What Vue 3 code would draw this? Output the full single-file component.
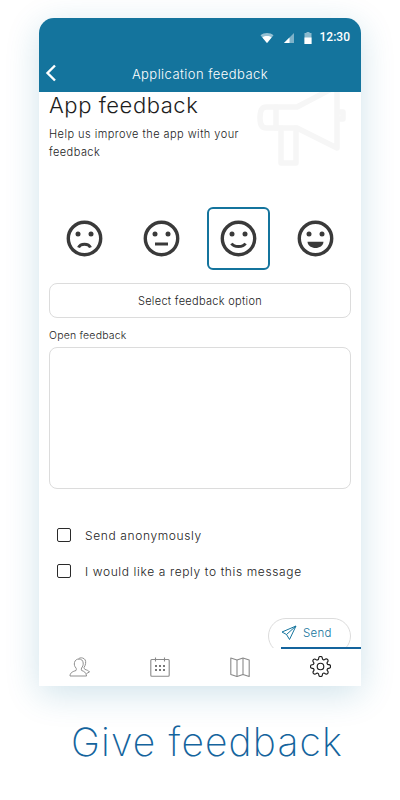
<template>
  <div class="screen">
    <div class="phone">
      <header class="app-header">
        <div class="status-bar">
          <svg class="st-icon" width="14" height="12" viewBox="0 0 14 12">
            <path d="M0.5 3.2 C4 0.4 10 0.4 13.5 3.2 L7 11 Z" fill="#fff" opacity="0.55" />
            <path d="M2.4 5.4 C5 3.6 9 3.6 11.6 5.4 L7 11 Z" fill="#fff" />
          </svg>
          <svg class="st-icon signal" width="12" height="12" viewBox="0 0 12 12">
            <path d="M11 1 V11 H1 Z" fill="#fff" opacity="0.45" />
            <path d="M6.5 5.5 V11 H1 Z" fill="#fff" />
          </svg>
          <svg class="st-icon battery" width="8" height="12" viewBox="0 0 8 12">
            <path d="M2.5 0 H5.5 V1 H7.5 V12 H0.5 V1 H2.5 Z" fill="#fff" opacity="0.5" />
            <rect x="0.5" y="5.5" width="7" height="6.5" fill="#fff" />
          </svg>
          <span class="clock">12:30</span>
        </div>
        <div class="nav-bar">
          <svg class="back" width="12" height="18" viewBox="0 0 12 18">
            <path d="M10 1.5 L2.5 9 L10 16.5" fill="none" stroke="#fff" stroke-width="2.4" />
          </svg>
          <span class="nav-title">Application feedback</span>
        </div>
      </header>

      <main class="content">
        <svg class="megaphone" width="95" height="76" viewBox="0 0 95 76" fill="none" stroke="#f6f6f6" stroke-width="5.5" stroke-linejoin="round" stroke-linecap="round">
          <path d="M11 15 H42 L82 -6 V56 L42 36 H11 Q5 36 5 26 Q5 15 11 15 Z" />
          <path d="M21 15 V36" />
          <path d="M26 36 V71 H41 V36" />
          <path d="M84 20 H88 V27 H84" />
        </svg>

        <h1>App feedback</h1>
        <p class="intro">Help us improve the app with your feedback</p>

        <div class="faces">
          <button
            v-for="face in faces"
            :key="face.id"
            class="face"
            :class="{ selected: face.id === selected }"
            @click="selected = face.id">
            <svg width="37" height="37" viewBox="0 0 37 37">
              <circle cx="18.5" cy="18.5" r="16.2" fill="none" stroke="#3a3a3a" stroke-width="3.4" />
              <circle cx="12" cy="14" r="2.5" fill="#3a3a3a" />
              <circle cx="25" cy="14" r="2.5" fill="#3a3a3a" />
              <path v-if="face.id === 'sad'" d="M12.5 27.5 C14.5 23 22.5 23 24.5 27.5" fill="none" stroke="#3a3a3a" stroke-width="3" />
              <path v-if="face.id === 'neutral'" d="M12 24 H25" fill="none" stroke="#3a3a3a" stroke-width="3" />
              <path v-if="face.id === 'happy'" d="M11.5 23.5 C14 27.5 23 27.5 25.5 23.5" fill="none" stroke="#3a3a3a" stroke-width="3" />
              <path v-if="face.id === 'great'" d="M10.5 21.7 H26.5 C26 30 11 30 10.5 21.7 Z" fill="#3a3a3a" />
            </svg>
          </button>
        </div>

        <button class="select-option">Select feedback option</button>

        <label class="field-label">Open feedback</label>
        <div class="textarea"></div>

        <div class="checks">
          <div class="check-row">
            <span class="checkbox"></span>
            <span>Send anonymously</span>
          </div>
          <div class="check-row">
            <span class="checkbox"></span>
            <span>I would like a reply to this message</span>
          </div>
        </div>

        <div class="send-row">
          <button class="send">
            <svg width="16" height="16" viewBox="0 0 16 16" fill="none" stroke="#14749d" stroke-width="1" stroke-linejoin="round">
              <path d="M15 1 L1 7 L5.5 9.5 L8.5 14.5 Z" />
              <path d="M15 1 L5.5 9.5" />
            </svg>
            <span>Send</span>
          </button>
        </div>
      </main>

      <nav class="tabs">
        <span class="indicator"></span>
        <div class="tab">
          <svg width="22" height="20" viewBox="0 0 22 20" fill="none" stroke="#909090" stroke-width="1" stroke-linejoin="round">
            <path d="M1 19 C1 15.5 4 14.5 7 13.5 C7.5 12.5 7.5 11.8 7 11 C5.5 9.5 5 7.5 5.5 5.5 C6 3 8 2 10 2 C12 2 14 3.2 14.2 6 C14.4 8 13.6 9.8 12.6 11 C12.2 11.8 12.2 12.5 12.6 13.5 C15 14.3 17 15.2 17.6 19 Z" />
            <path d="M9.5 2 C10.5 0.8 12 0.6 13.5 1 C16 1.6 17 3.6 16.6 6.4 C16.4 8 15.8 9.4 15 10.5 C15 11.5 15.4 12 16 12.4 C17.5 13 19.5 13.4 20.5 15 L17.5 16.5" />
          </svg>
        </div>
        <div class="tab">
          <svg width="20" height="20" viewBox="0 0 20 20" fill="none" stroke="#8a8a8a" stroke-width="1.1">
            <rect x="0.8" y="2.5" width="18.4" height="16.7" rx="1" />
            <path d="M5.5 0.5 V4.5 M14.5 0.5 V4.5" />
            <g fill="#777" stroke="none">
              <rect x="5" y="8" width="2" height="2" /><rect x="9" y="8" width="2" height="2" /><rect x="13" y="8" width="2" height="2" />
              <rect x="5" y="12" width="2" height="2" /><rect x="9" y="12" width="2" height="2" /><rect x="13" y="12" width="2" height="2" />
            </g>
          </svg>
        </div>
        <div class="tab">
          <svg width="20" height="20" viewBox="0 0 20 20" fill="none" stroke="#8a8a8a" stroke-width="1.1" stroke-linejoin="round">
            <path d="M0.8 1 L7 3 L13 1 L19.2 3 V19.5 L13 17.5 L7 19.5 L0.8 17.5 Z" />
            <path d="M7 3 V19.5 M13 1 V17.5" />
          </svg>
        </div>
        <div class="tab">
          <svg width="21" height="21" viewBox="0.5 0.5 23 23" fill="none" stroke="#1c1c1c" stroke-width="1.25" stroke-linejoin="round">
            <circle cx="12" cy="12" r="3.6" />
            <path d="M19.4 15a1.65 1.65 0 0 0 .33 1.82l.06.06a2 2 0 1 1-2.83 2.83l-.06-.06a1.65 1.65 0 0 0-1.82-.33 1.65 1.65 0 0 0-1 1.51V21a2 2 0 1 1-4 0v-.09a1.65 1.65 0 0 0-1-1.51 1.65 1.65 0 0 0-1.82.33l-.06.06a2 2 0 1 1-2.83-2.83l.06-.06a1.65 1.65 0 0 0 .33-1.82 1.65 1.65 0 0 0-1.51-1H3a2 2 0 1 1 0-4h.09a1.65 1.65 0 0 0 1.51-1 1.65 1.65 0 0 0-.33-1.82l-.06-.06a2 2 0 1 1 2.83-2.83l.06.06a1.65 1.65 0 0 0 1.82.33H9a1.65 1.65 0 0 0 1-1.51V3a2 2 0 1 1 4 0v.09a1.65 1.65 0 0 0 1 1.51 1.65 1.65 0 0 0 1.82-.33l.06-.06a2 2 0 1 1 2.83 2.83l-.06.06a1.65 1.65 0 0 0-.33 1.82V9a1.65 1.65 0 0 0 1.51 1H21a2 2 0 1 1 0 4h-.09a1.65 1.65 0 0 0-1.51 1z" />
          </svg>
        </div>
      </nav>
    </div>

    <h2 class="caption">Give feedback</h2>
  </div>
</template>

<script setup>
import { ref } from 'vue'

const selected = ref('happy')

const faces = [
  { id: 'sad' },
  { id: 'neutral' },
  { id: 'happy' },
  { id: 'great' }
]
</script>

<style scoped>
.screen {
  width: 400px;
  height: 800px;
  padding-top: 18px;
  box-sizing: border-box;
  background: #fff;
  overflow: hidden;
  font-family: "Inter", "Open Sans", sans-serif;
  font-weight: 300;
  color: #222;
}

.phone {
  position: relative;
  width: 322px;
  height: 668px;
  margin: 0 0 0 39px;
  display: flex;
  flex-direction: column;
  background: #fff;
  border-radius: 15px 15px 0 0;
  box-shadow: 0 8px 34px rgba(20, 116, 157, 0.2);
}

.app-header {
  height: 74px;
  flex-shrink: 0;
  background: #14749d;
  border-radius: 15px 15px 0 0;
  color: #fff;
}

.status-bar {
  height: 38px;
  display: flex;
  align-items: center;
  justify-content: flex-end;
  padding-right: 11px;
}

.st-icon {
  margin-right: 9px;
  margin-top: 1px;
}

.st-icon.battery {
  margin-right: 8px;
}

.clock {
  font-family: "Roboto", sans-serif;
  font-weight: 500;
  font-size: 12px;
}

.nav-bar {
  position: relative;
  height: 36px;
  display: flex;
  align-items: center;
  justify-content: center;
}

.back {
  position: absolute;
  left: 6px;
  top: 8px;
}

.nav-title {
  font-size: 13px;
  font-weight: 300;
  letter-spacing: 0.45px;
  margin-top: -1px;
}

.content {
  position: relative;
  flex: 1;
  min-height: 0;
  padding: 0 10px;
}

.megaphone {
  position: absolute;
  right: 11px;
  top: 0;
}

h1 {
  position: relative;
  margin: 0;
  height: 26px;
  line-height: 26px;
  font-size: 22px;
  font-weight: 300;
  letter-spacing: 0.55px;
  color: #1d1d1d;
}

.intro {
  position: relative;
  width: 210px;
  margin: 7px 0 0;
  font-size: 11px;
  line-height: 18px;
  font-weight: 300;
  letter-spacing: 0.45px;
  color: #222;
}

.faces {
  display: flex;
  justify-content: center;
  gap: 14px;
  margin-top: 46px;
}

.face {
  width: 63px;
  height: 63px;
  padding: 0;
  display: flex;
  align-items: center;
  justify-content: center;
  background: none;
  border: 2px solid transparent;
  border-radius: 6px;
  box-sizing: border-box;
}

.face.selected {
  border-color: #14749d;
}

.select-option {
  display: block;
  width: 100%;
  height: 35px;
  margin-top: 13px;
  background: #fff;
  border: 1px solid #dcdcdc;
  border-radius: 8px;
  font-family: inherit;
  font-size: 11px;
  font-weight: 300;
  letter-spacing: 0.3px;
  color: #222;
}

.field-label {
  display: block;
  margin-top: 11px;
  height: 18px;
  line-height: 14px;
  font-size: 10.5px;
  font-weight: 300;
  letter-spacing: 0.2px;
  color: #222;
}

.textarea {
  height: 142px;
  box-sizing: border-box;
  border: 1px solid #dcdcdc;
  border-radius: 8px;
}

.checks {
  display: flex;
  flex-direction: column;
  gap: 16px;
  margin-top: 36px;
  padding-left: 8px;
}

.check-row {
  display: flex;
  align-items: center;
  gap: 14px;
  height: 20px;
  font-size: 12px;
  letter-spacing: 0.62px;
  color: #222;
}

.checkbox {
  width: 14px;
  height: 14px;
  border: 1.5px solid #2a2a2a;
  border-radius: 2px;
  box-sizing: border-box;
}

.send-row {
  display: flex;
  justify-content: flex-end;
  margin-top: 37px;
  height: 30px;
  overflow: hidden;
}

.send {
  width: 83px;
  height: 36px;
  padding: 0 0 6px 12px;
  display: flex;
  align-items: center;
  gap: 6px;
  background: #fff;
  border: 1px solid #dcdcdc;
  border-radius: 18px;
  box-sizing: border-box;
  font-family: inherit;
  font-size: 11.5px;
  font-weight: 300;
  letter-spacing: 0.3px;
  color: #14749d;
}

.tabs {
  position: relative;
  height: 38px;
  flex-shrink: 0;
  display: grid;
  grid-template-columns: repeat(4, 80px);
  padding-left: 1px;
  background: #fff;
}

.indicator {
  position: absolute;
  right: 0;
  top: -1px;
  width: 80px;
  height: 2px;
  background: #14649d;
}

.tab {
  display: flex;
  align-items: center;
  justify-content: center;
  padding-bottom: 1px;
}

.caption {
  margin: 34px 0 0;
  padding-left: 14px;
  text-align: center;
  font-size: 39px;
  line-height: 44px;
  font-weight: 200;
  letter-spacing: 1.15px;
  color: #14649d;
}
</style>
